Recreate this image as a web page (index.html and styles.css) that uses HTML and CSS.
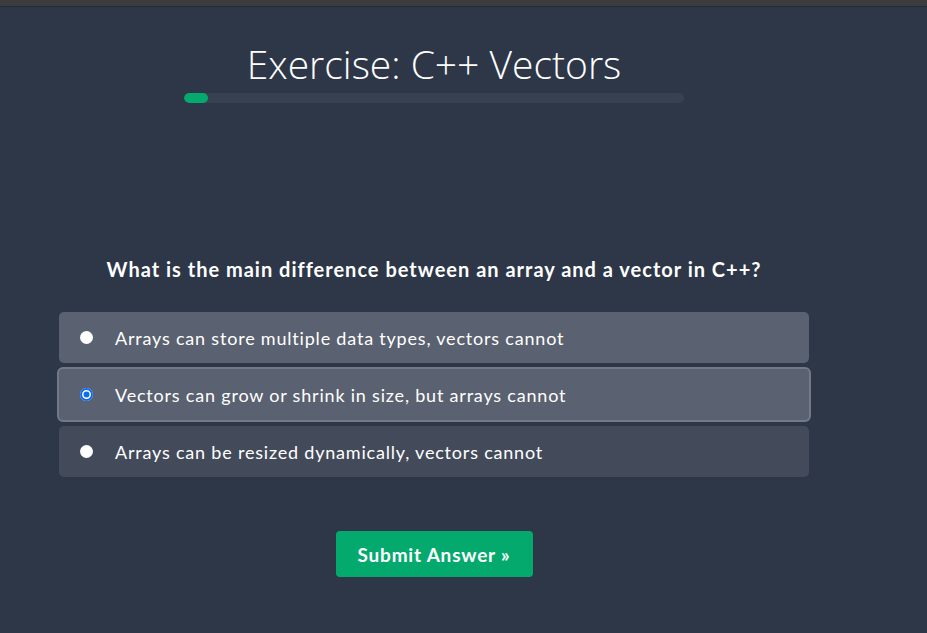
FILE: index.html
```html
<!DOCTYPE html>
<html lang="en">
<head>
<meta charset="utf-8">
<title>Exercise: C++ Vectors</title>
<link rel="stylesheet" href="styles.css">
</head>
<body>
<div class="topbar"></div>
<main class="container">
  <h1 class="title">Exercise: C++ Vectors</h1>
  <div class="progress"><div class="progress-fill" style="width: 24px"></div></div>
  <p class="question">What is the main difference between an array and a vector in C++?</p>
  <div class="options">
    <label class="option option-hover"><input type="radio" name="q" class="radio"><span>Arrays can store multiple data types, vectors cannot</span></label>
    <label class="option option-selected"><input type="radio" name="q" class="radio" checked><span>Vectors can grow or shrink in size, but arrays cannot</span></label>
    <label class="option"><input type="radio" name="q" class="radio"><span>Arrays can be resized dynamically, vectors cannot</span></label>
  </div>
  <div class="actions"><button class="submit">Submit Answer »</button></div>
</main>
</body>
</html>
```
FILE: styles.css
```css
* { box-sizing: border-box; }
html, body { margin: 0; padding: 0; }
body {
  background: #2d3748;
  font-family: "Lato", "Noto Sans", sans-serif;
  color: #fff;
  height: 633px;
  overflow: hidden;
}
.topbar {
  height: 7px;
  background: #3c3c3f;
  border-bottom: 1px solid #28292d;
}
.container {
  width: 868px;
}
.title {
  margin: 33px 0 0;
  font-family: "Open Sans", sans-serif;
  font-weight: 300;
  font-size: 39px;
  line-height: 47px;
  text-align: center;
  color: #fff;
}
.progress {
  width: 500px;
  height: 10px;
  margin: 6px auto 0;
  background: #374151;
  border-radius: 5px;
  overflow: hidden;
}
.progress-fill {
  height: 100%;
  background: #04aa6d;
  border-radius: 5px;
}
.question {
  margin: 154px 0 0;
  font-weight: 700;
  font-size: 20px;
  line-height: 24px;
  letter-spacing: 1px;
  text-align: center;
}
.options {
  margin: 31px 59px 0;
  display: flex;
  flex-direction: column;
  gap: 4px;
}
.option {
  display: flex;
  align-items: center;
  height: 51px;
  padding-left: 21px;
  background: #434b5b;
  border-radius: 5px;
  font-size: 18px;
  letter-spacing: 0.8px;
  color: #fff;
  cursor: pointer;
}
.option-hover { background: #5a6170; }
.option-selected {
  height: 55px;
  margin: 0 -2px;
  padding-left: 21px;
  background: #5a6170;
  border: 2px solid #727a88;
  border-radius: 6px;
}
.radio {
  appearance: none;
  -webkit-appearance: none;
  width: 13px;
  height: 13px;
  margin: 0 22px 0 0;
  border-radius: 50%;
  background: #fff;
  flex: none;
}
.radio:checked {
  background: #0b6cf0;
  box-shadow: inset 0 0 0 2px #0b6cf0, inset 0 0 0 3.5px #fff;
}
.actions {
  margin-top: 54px;
  display: flex;
  justify-content: center;
}
.submit {
  width: 197px;
  height: 46px;
  padding: 0;
  border: none;
  border-radius: 4px;
  background: #04aa6d;
  color: #fff;
  font-family: "Lato", "Noto Sans", sans-serif;
  font-weight: 700;
  font-size: 19px;
  letter-spacing: 0.8px;
  cursor: pointer;
}
```
